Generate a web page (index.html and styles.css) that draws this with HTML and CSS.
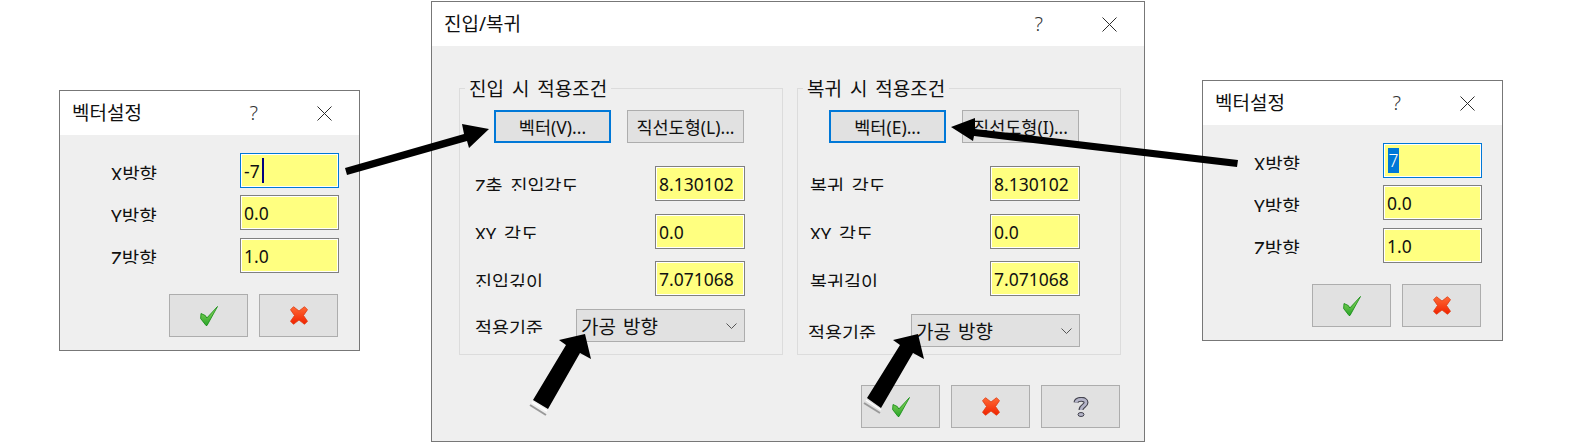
FILE: index.html
```html
<!DOCTYPE html>
<html lang="ko">
<head>
<meta charset="utf-8">
<title>진입/복귀</title>
<link rel="stylesheet" href="styles.css">
</head>
<body>
<svg width="0" height="0" class="defs">
  <defs>
    <linearGradient id="g-check" x1="0" y1="0" x2="0" y2="1">
      <stop offset="0" stop-color="#9adc64"/><stop offset="1" stop-color="#2aa52a"/>
    </linearGradient>
    <linearGradient id="g-cross" x1="0" y1="0" x2="0" y2="1">
      <stop offset="0" stop-color="#ff6a35"/><stop offset="1" stop-color="#f02200"/>
    </linearGradient>
    <symbol id="i-check" viewBox="0 0 18 20">
      <path d="M17.500.5 7 19.500H6L.6 12.500 1 7.500l4.300 2 1.500 2.500Z" fill="url(#g-check)" stroke="#0c8a0c" stroke-width=".8"/>
    </symbol>
    <symbol id="i-cross" viewBox="0 0 18 19">
      <path d="M3.500.7 9 5 14.500.7l3 3L13.500 9.500l4 5.800-3 3L9 14l-5.500 4.300-3-3 4-5.800L.5 3.700Z" fill="url(#g-cross)" stroke="#e03a10" stroke-width=".8"/>
    </symbol>
    <symbol id="i-help" viewBox="0 0 16 20">
      <path d="M3 5.500C3.500 1.500 13 1 13 5.500c0 3.500-5 3.500-5 7.500" fill="none" stroke="#44444f" stroke-width="5"/>
      <path d="M3 5.500C3.500 1.500 13 1 13 5.500c0 3.500-5 3.500-5 7.500" fill="none" stroke="#b4b4c8" stroke-width="2.800"/>
      <ellipse cx="8" cy="17.500" rx="3" ry="2" fill="#b4b4c8" stroke="#44444f"/>
    </symbol>
    <symbol id="i-close" viewBox="0 0 15 15">
      <path d="M.5.500 14.500 14.500M14.500.500.500 14.500" fill="none" stroke="#2b2b2b"/>
    </symbol>
  </defs>
</svg>

<section class="dialog vector vector-left">
  <header class="titlebar">
    <span class="title">벡터설정</span>
    <span class="help-mark">?</span>
    <svg class="close"><use href="#i-close"/></svg>
  </header>
  <div class="body vector-body">
    <div class="vector-form">
      <div class="label vector-label">X방향</div>
      <div class="field focused">-7<span class="caret"></span></div>
      <div class="label vector-label">Y방향</div>
      <div class="field">0.0</div>
      <div class="label vector-label">Z방향</div>
      <div class="field late">1.0</div>
    </div>
    <div class="actions vector-actions">
      <button class="btn icon-btn"><svg class="ic-check"><use href="#i-check"/></svg></button>
      <button class="btn icon-btn"><svg class="ic-cross"><use href="#i-cross"/></svg></button>
    </div>
  </div>
</section>

<section class="dialog main">
  <header class="titlebar">
    <span class="title">진입/복귀</span>
    <span class="help-mark">?</span>
    <svg class="close"><use href="#i-close"/></svg>
  </header>
  <div class="body main-body">
    <div class="groups">
      <fieldset class="group group-in">
        <legend class="legend">진입 시 적용조건</legend>
        <div class="group-buttons">
          <button class="btn text-btn active">벡터(V)...</button>
          <button class="btn text-btn">직선도형(L)...</button>
        </div>
        <div class="group-form">
          <div class="label group-label">Z축 진입각도</div>
          <div class="field">8.130102</div>
          <div class="label group-label">XY 각도</div>
          <div class="field">0.0</div>
          <div class="label group-label">진입깊이</div>
          <div class="field">7.071068</div>
        </div>
        <div class="combo-row">
          <div class="label combo-label">적용기준</div>
          <div class="combo"><span>가공 방향</span><svg class="chevron" viewBox="0 0 11 6"><path d="M.5.500 5.500 5.500 10.500.500" fill="none" stroke="#555"/></svg></div>
        </div>
      </fieldset>
      <fieldset class="group group-out">
        <legend class="legend">복귀 시 적용조건</legend>
        <div class="group-buttons">
          <button class="btn text-btn active">벡터(E)...</button>
          <button class="btn text-btn">직선도형(I)...</button>
        </div>
        <div class="group-form">
          <div class="label group-label">복귀 각도</div>
          <div class="field">8.130102</div>
          <div class="label group-label">XY 각도</div>
          <div class="field">0.0</div>
          <div class="label group-label">복귀길이</div>
          <div class="field">7.071068</div>
        </div>
        <div class="combo-row">
          <div class="label combo-label">적용기준</div>
          <div class="combo"><span>가공 방향</span><svg class="chevron" viewBox="0 0 11 6"><path d="M.5.500 5.500 5.500 10.500.500" fill="none" stroke="#555"/></svg></div>
        </div>
      </fieldset>
    </div>
    <div class="actions main-actions">
      <button class="btn icon-btn"><svg class="ic-check"><use href="#i-check"/></svg></button>
      <button class="btn icon-btn"><svg class="ic-cross"><use href="#i-cross"/></svg></button>
      <button class="btn icon-btn"><svg class="ic-help"><use href="#i-help"/></svg></button>
    </div>
  </div>
</section>

<section class="dialog vector vector-right">
  <header class="titlebar">
    <span class="title">벡터설정</span>
    <span class="help-mark">?</span>
    <svg class="close"><use href="#i-close"/></svg>
  </header>
  <div class="body vector-body">
    <div class="vector-form">
      <div class="label vector-label">X방향</div>
      <div class="field focused"><span class="selected">7</span></div>
      <div class="label vector-label">Y방향</div>
      <div class="field">0.0</div>
      <div class="label vector-label">Z방향</div>
      <div class="field late">1.0</div>
    </div>
    <div class="actions vector-actions">
      <button class="btn icon-btn"><svg class="ic-check"><use href="#i-check"/></svg></button>
      <button class="btn icon-btn"><svg class="ic-cross"><use href="#i-cross"/></svg></button>
    </div>
  </div>
</section>

<svg class="arrows" viewBox="0 0 1575 444" width="1575" height="444">
  <path d="M345 168 464 134 462 124 489 129 469 148 467 141 347 175Z"/>
  <path d="M1238 160 975 129 975 118 951 127 973 141 974 136 1237 167Z"/>
  <path d="M533 400 566 345 559 340 585 334 591 359 580 353 548 409Z"/>
  <path d="M867 398 900 345 893 340 918 334 924 359 913 353 881 408Z"/>
  <path d="M532 402 547 411" class="tail-gap"/>
  <path d="M530 405 546 415" class="tail-shade"/>
  <path d="M866 400 881 410" class="tail-gap"/>
  <path d="M864 403 880 413" class="tail-shade"/>
</svg>
</body>
</html>
```
FILE: styles.css
```css
* { box-sizing: border-box; }

html, body {
  margin: 0;
  width: 1575px;
  height: 444px;
  overflow: hidden;
  background: #fff;
}

body {
  position: relative;
  font-family: "Noto Sans", "Noto Sans CJK KR", sans-serif;
  font-size: 19px;
  color: #111;
}

.defs { position: absolute; }

/* windows on the free canvas */
.dialog {
  position: absolute;
  display: flex;
  flex-direction: column;
  border: 1px solid #777;
  background: #efefef;
}
.vector { width: 301px; height: 261px; }
.vector-left { left: 59px; top: 90px; }
.vector-right { left: 1202px; top: 80px; }
.main { left: 431px; top: 1px; width: 714px; height: 441px; }

.titlebar {
  display: flex;
  align-items: center;
  height: 44px;
  padding: 0 27px 0 12px;
  background: #fff;
  flex: none;
}
.title { flex: 1; font-size: 19px; line-height: 24px; }
.help-mark { font-size: 20px; font-weight: 300; margin-right: 59px; color: #333; line-height: 24px; }
.close { width: 15px; height: 15px; }

/* controls */
.field {
  height: 35px;
  border: 1px solid #808080;
  box-shadow: inset 0 0 0 1px #fff;
  background: #ffff80;
  padding-left: 3px;
  font-size: 17.500px;
  line-height: 32px;
  white-space: nowrap;
  display: flex;
  align-items: center;
}
.field.focused { border-color: #0078d7; }
.field.late { margin-top: 1px; }
.caret { width: 2px; height: 25px; margin-left: 2px; background: #00007f; }
.selected {
  height: 25px;
  line-height: 24px;
  width: 11px;
  background: #0078d7;
  color: #fff;
  text-align: center;
  margin-left: 1px;
  font-weight: 300;
}

.btn {
  display: flex;
  align-items: center;
  justify-content: center;
  margin: 0;
  padding: 0;
  font: inherit;
  color: inherit;
  border: 1px solid #adadad;
  background: #e1e1e1;
}
.icon-btn { width: 79px; height: 43px; }
.text-btn { width: 117px; height: 33px; font-size: 17.500px; }
.text-btn.active { border: 2px solid #0078d7; }

.ic-check { width: 18px; height: 20px; }
.ic-cross { width: 18px; height: 19px; }
.ic-help { width: 16px; height: 20px; }

.actions { display: flex; justify-content: flex-end; gap: 11px; }

/* the reference's labels lose their lowest pixel rows: the box clips them */
.label {
  overflow: hidden;
  white-space: nowrap;
  word-spacing: 3px;
  line-height: 30px;
}

/* vector dialog */
.vector-body { padding: 18px 20px 0 51px; }
.vector-form {
  display: grid;
  grid-template-columns: 1fr 99px;
  row-gap: 7px;
}
.vector-label { height: 19px; margin-top: 8px; line-height: 28px; }
.vector-actions { margin-top: 21px; margin-right: 1px; }

/* main dialog */
.main-body { padding: 42px 22px 0 27px; }
.groups { display: flex; gap: 14px; }
.group {
  position: relative;
  width: 324px;
  height: 267px;
  margin: 0;
  padding: 0;
  border: 1px solid #dcdcdc;
  min-width: 0;
}
.legend {
  position: absolute;
  left: 5px;
  top: -12px;
  padding: 0 4px;
  background: #efefef;
  font-size: 19px;
  word-spacing: 3px;
  line-height: 24px;
}
.group-in { padding: 21px 37px 0 34px; }
.group-out { padding: 21px 40px 0 31px; }
.group-buttons { display: flex; justify-content: space-between; margin-right: 1px; }
.group-form {
  display: grid;
  grid-template-columns: 1fr 90px;
  row-gap: 13px;
  margin-top: 23px;
}
.group-form .field:last-child { margin-top: -1px; }
.group-label { height: 19px; margin: 6px 0 0 -19px; font-size: 18.500px; line-height: 27px; }
.combo-row { display: flex; align-items: flex-start; margin: 13px 0 0 -19px; }
.group-out .combo-row { margin: 18px 0 0 -21px; }
.combo-label { flex: 1; height: 20px; margin-top: 5px; font-size: 18.500px; line-height: 27px; }
.combo {
  display: flex;
  align-items: center;
  justify-content: space-between;
  width: 169px;
  height: 33px;
  padding: 0 7px 0 4px;
  border: 1px solid #adadad;
  background: #e1e1e1;
  font-size: 19px;
  word-spacing: 2px;
}
.chevron { width: 11px; height: 6px; }
.main-actions { margin-top: 30px; margin-right: 2px; }

/* annotation arrows lying over the dialogs */
.arrows { position: absolute; left: 0; top: 0; pointer-events: none; }
.tail-gap { stroke: #fff; stroke-width: 1.500; fill: none; }
.tail-shade { stroke: #999; stroke-width: 2; fill: none; }
```
